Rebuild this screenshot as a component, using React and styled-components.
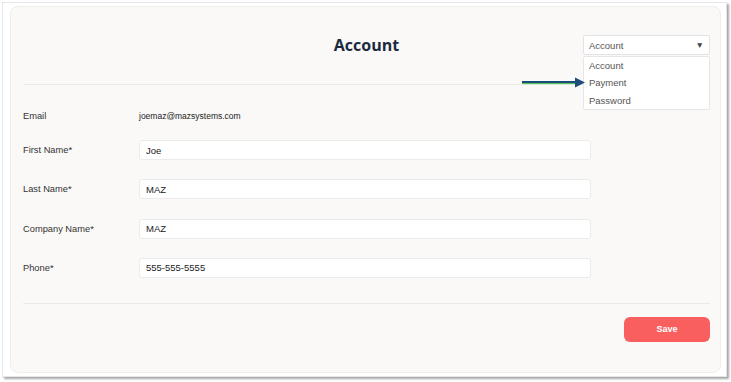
import React from "react";
import styled, { createGlobalStyle } from "styled-components";

const Global = createGlobalStyle`
  html, body { margin: 0; padding: 0; background: #ffffff; }
  body { font-family: "Liberation Sans", Arial, sans-serif; }
  * { box-sizing: border-box; }
`;

const Page = styled.div`
  width: 731px;
  height: 382px;
  padding: 2px 4px 5px 2px;
  background: #ffffff;
`;

const Frame = styled.div`
  height: 100%;
  border: 1px solid #e3e7e7;
  background: #ffffff;
  box-shadow: 2px 2px 2px rgba(60, 60, 60, 0.45);
  padding: 3px 5px 3px 7px;
`;

const Card = styled.div`
  position: relative;
  height: 100%;
  background: #faf9f7;
  border: 1px solid #efeeea;
  border-radius: 8px;
  padding: 0 10px 0 12px;
  display: flex;
  flex-direction: column;
`;

const Header = styled.div`
  display: grid;
  grid-template-columns: 1fr auto 1fr;
  align-items: center;
  height: 78px;
  padding-top: 28px;
  padding-bottom: 29px;
  border-bottom: 1px solid #ebeae6;
`;

const Title = styled.h1`
  grid-column: 2;
  margin: 0;
  font-family: "Open Sans", sans-serif;
  font-weight: 700;
  font-size: 16px;
  line-height: 20px;
  color: #1b2a40;
`;

const SelectWrap = styled.div`
  grid-column: 3;
  justify-self: end;
  position: relative;
  width: 127px;
`;

const Select = styled.div`
  height: 20px;
  background: #ffffff;
  border: 1px solid #e3e3e3;
  border-radius: 2px;
  display: flex;
  align-items: center;
  justify-content: space-between;
  padding: 0 5px 0 5px;
  font-size: 9.5px;
  color: #555555;
`;

const Caret = styled.span`
  font-size: 8.5px;
  color: #444;
`;

const Menu = styled.ul`
  position: absolute;
  top: 21px;
  left: 0;
  right: 0;
  margin: 0;
  padding: 0;
  list-style: none;
  background: #ffffff;
  border: 1px solid #e6e6e6;
  border-radius: 2px;
  z-index: 2;
`;

const MenuItem = styled.li`
  height: 17.3px;
  line-height: 17.3px;
  padding-left: 5px;
  font-size: 9.5px;
  color: #555555;
`;

const Pointer = styled.svg`
  position: absolute;
  left: 511px;
  top: 69px;
  z-index: 3;
`;

const Form = styled.div`
  display: flex;
  flex-direction: column;
  padding-top: 21px;
  padding-bottom: 25px;
  border-bottom: 1px solid #ebeae6;
`;

const Row = styled.div`
  display: grid;
  grid-template-columns: 116px 452px;
  align-items: center;
  height: 20px;
  margin-bottom: ${(p) => p.$gap}px;
`;

const Label = styled.span`
  font-size: 9.3px;
  color: #333333;
`;

const Value = styled.span`
  font-size: 8.5px;
  color: #222222;
`;

const Input = styled.div`
  height: 20px;
  background: #ffffff;
  border: 1px solid #ebebea;
  border-radius: 3px;
  display: flex;
  align-items: center;
  padding-left: 6px;
  font-size: 9.5px;
  color: #222222;
`;

const Footer = styled.div`
  display: flex;
  justify-content: flex-end;
  padding-top: 13px;
`;

const SaveButton = styled.button`
  width: 86px;
  height: 25px;
  border: none;
  border-radius: 6px;
  background: #f95f5f;
  color: #ffffff;
  font-family: "Liberation Sans", Arial, sans-serif;
  font-weight: 700;
  font-size: 9px;
`;

const fields = [
  { label: "First Name*", value: "Joe" },
  { label: "Last Name*", value: "MAZ" },
  { label: "Company Name*", value: "MAZ" },
  { label: "Phone*", value: "555-555-5555" },
];

export default function App() {
  return (
    <>
      <Global />
      <Page>
        <Frame>
          <Card>
            <Header>
              <Title>Account</Title>
              <SelectWrap>
                <Select>
                  <span>Account</span>
                  <Caret>▼</Caret>
                </Select>
                <Menu>
                  <MenuItem>Account</MenuItem>
                  <MenuItem>Payment</MenuItem>
                  <MenuItem>Password</MenuItem>
                </Menu>
              </SelectWrap>
            </Header>
            <Pointer width="64" height="14" viewBox="0 0 64 14">
              <line x1="0" y1="7.6" x2="56" y2="7.6" stroke="#3cc04c" strokeWidth="1" />
              <line x1="0" y1="6" x2="56" y2="6" stroke="#1d4c7a" strokeWidth="2" />
              <polygon points="53,1.5 63,6.5 53,11.5" fill="#1d4c7a" />
            </Pointer>
            <Form>
              <Row $gap={14}>
                <Label>Email</Label>
                <Value>joemaz@mazsystems.com</Value>
              </Row>
              {fields.map((f, i) => (
                <Row key={f.label} $gap={i < fields.length - 1 ? 19.3 : 0}>
                  <Label>{f.label}</Label>
                  <Input>{f.value}</Input>
                </Row>
              ))}
            </Form>
            <Footer>
              <SaveButton>Save</SaveButton>
            </Footer>
          </Card>
        </Frame>
      </Page>
    </>
  );
}
